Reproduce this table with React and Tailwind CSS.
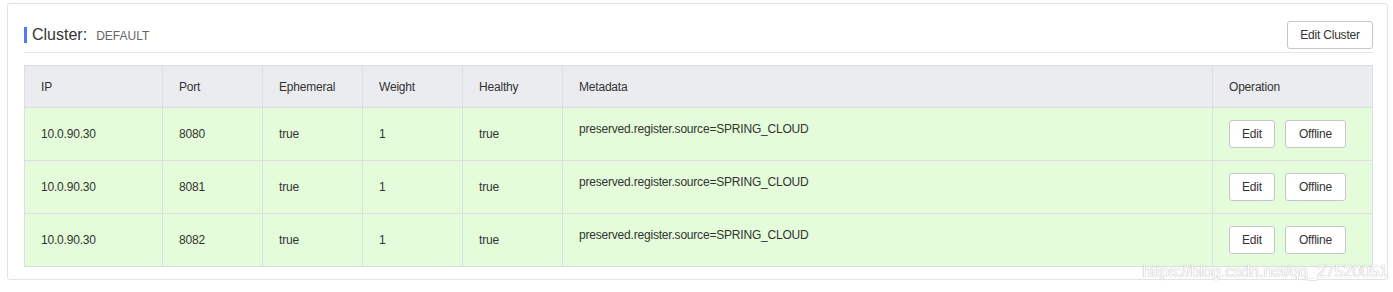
import React from "react";

const rows = [
  { ip: "10.0.90.30", port: "8080" },
  { ip: "10.0.90.30", port: "8081" },
  { ip: "10.0.90.30", port: "8082" },
];

const headers = ["IP", "Port", "Ephemeral", "Weight", "Healthy", "Metadata", "Operation"];
const widths = ["w-[138px]", "w-[100px]", "w-[100px]", "w-[100px]", "w-[100px]", "", "w-[160px]"];

function Btn({ children, className = "" }) {
  return (
    <button
      className={
        "h-[28px] rounded-[3px] border border-[#c4c6cf] bg-white text-[12px] text-[#333] leading-none tracking-[-0.2px] " +
        className
      }
    >
      {children}
    </button>
  );
}

export default function App() {
  return (
    <div
      className="relative pl-[7px] pr-[5px] pt-[3px] pb-[13px] bg-white"
      style={{ fontFamily: '"Liberation Sans", Arial, sans-serif' }}
    >
      <div className="rounded-[3px] border border-[#e3e3e3] bg-white pl-4 pr-[14px] pt-[17px] pb-[12px]">
        <div className="flex items-center justify-between h-[27px]">
          <div className="flex items-center">
            <span className="block w-[3px] h-[16px] bg-[#4a7cf4] mr-[5px]"></span>
            <span className="text-[16px] text-[#333] leading-none">Cluster:</span>
            <span className="text-[12px] text-[#666] ml-[9px] mt-[2px] leading-none">DEFAULT</span>
          </div>
          <Btn className="w-[86px] h-[27px]">Edit Cluster</Btn>
        </div>
        <div className="mt-[4px] h-px bg-[#e6e6e6]"></div>
        <table className="mt-[12px] w-full table-fixed border-collapse text-[12px] text-[#333] tracking-[-0.2px]">
          <colgroup>
            {widths.map((w, i) => (
              <col key={i} className={w} />
            ))}
          </colgroup>
          <thead>
            <tr className="h-[42px] bg-[#ebecf0]">
              {headers.map((h) => (
                <th
                  key={h}
                  className="border border-[#dcdee3] px-4 text-left font-normal align-middle"
                >
                  {h}
                </th>
              ))}
            </tr>
          </thead>
          <tbody>
            {rows.map((r) => (
              <tr key={r.port} className="h-[53px] bg-[#e4fcda]">
                <td className="border border-[#dcdee3] px-4 align-middle">{r.ip}</td>
                <td className="border border-[#dcdee3] px-4 align-middle">{r.port}</td>
                <td className="border border-[#dcdee3] px-4 align-middle">true</td>
                <td className="border border-[#dcdee3] px-4 align-middle">1</td>
                <td className="border border-[#dcdee3] px-4 align-middle">true</td>
                <td className="border border-[#dcdee3] px-4 pt-[13px] align-top leading-[16px]">
                  preserved.register.source=SPRING_CLOUD
                </td>
                <td className="border border-[#dcdee3] px-4 align-middle">
                  <div className="flex gap-[10px]">
                    <Btn className="w-[46px]">Edit</Btn>
                    <Btn className="w-[61px]">Offline</Btn>
                  </div>
                </td>
              </tr>
            ))}
          </tbody>
        </table>
      </div>
      <div
        className="absolute right-[5px] top-[264px] text-[16px] text-white leading-none pointer-events-none"
        style={{
          textShadow:
            "0 0 1px rgba(150,150,150,0.6), 0 0 1px rgba(150,150,150,0.6)",
        }}
      >
        https://blog.csdn.net/qq_27520051
      </div>
    </div>
  );
}
